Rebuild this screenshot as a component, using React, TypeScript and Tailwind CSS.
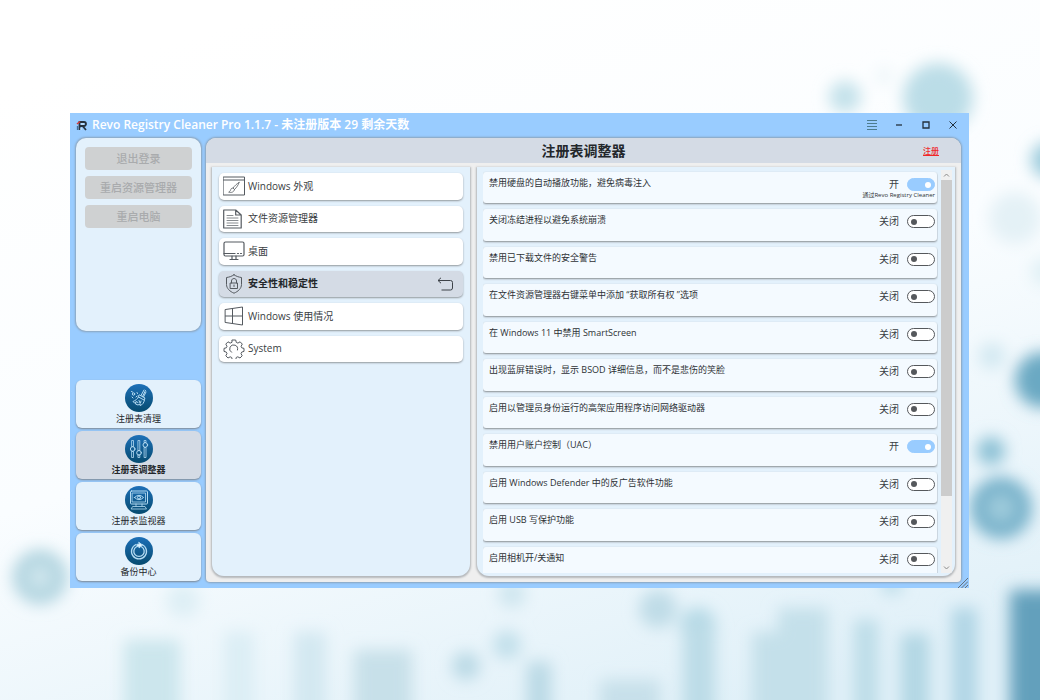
import type { ReactNode } from "react";

const commands = ["退出登录", "重启资源管理器", "重启电脑"];

const tweaks = [
  { text: "禁用硬盘的自动播放功能，避免病毒注入", on: true, note: "通过Revo Registry Cleaner" },
  { text: "关闭冻结进程以避免系统崩溃", on: false },
  { text: "禁用已下载文件的安全警告", on: false },
  { text: "在文件资源管理器右键菜单中添加 “获取所有权 ”选项", on: false },
  { text: "在 Windows 11 中禁用 SmartScreen", on: false },
  { text: "出现蓝屏错误时，显示 BSOD 详细信息，而不是悲伤的笑脸", on: false },
  { text: "启用以管理员身份运行的高架应用程序访问网络驱动器", on: false },
  { text: "禁用用户账户控制（UAC）", on: true },
  { text: "启用 Windows Defender 中的反广告软件功能", on: false },
  { text: "启用 USB 写保护功能", on: false },
  { text: "启用相机开/关通知", on: false },
];

function LineIcon({ children }: { children: ReactNode }) {
  return (
    <svg
      viewBox="0 0 22 20"
      className="w-[22px] h-5 shrink-0"
      fill="none"
      stroke="#555a60"
      strokeWidth="1"
      strokeLinejoin="round"
      strokeLinecap="round"
    >
      {children}
    </svg>
  );
}

const categories = [
  {
    label: "Windows 外观",
    icon: (
      <LineIcon>
        <path d="M.5 1h21v18H.5zM.5 4h21" />
        <path d="M16 6.500c-2 1-4.500 3.500-6 5.500l1.500 1.500c2-2 4-4.500 4.500-7zM10 12c-2 0-2 1-2.500 2.300-.4 1-1 1.500-1.800 1.900 2.300.7 5.300.2 5.800-2.700" strokeWidth=".8" />
      </LineIcon>
    ),
  },
  {
    label: "文件资源管理器",
    icon: (
      <LineIcon>
        <path d="M.7 1h12l5.500 5v13H.7zM12.700 1v5h5.500" strokeWidth="1.200" />
        <path d="M4 6.500h6M4 9h11M4 11.500h11M4 14h11M4 16.500h11" strokeWidth=".7" />
      </LineIcon>
    ),
  },
  {
    label: "桌面",
    icon: (
      <LineIcon>
        <rect x="1" y="1" width="20" height="14" rx="1.500" strokeWidth="1.200" />
        <path d="M1 12.500h11M14.500 12.500h1M17.500 12.500h1M9 15v3M13 15v3M7 18.500h8" strokeWidth="1.200" />
      </LineIcon>
    ),
  },
  {
    label: "安全性和稳定性",
    active: true,
    icon: (
      <LineIcon>
        <path d="M11 .8c2.500 1.700 5 2.400 7.500 2.700v7c0 4-3.500 7-7.500 8.700C7 17.500 3.500 14.500 3.500 10.500v-7C6 3.200 8.500 2.500 11 .8z" />
        <path d="M7.500 9h7v5.500h-7zM8.500 9V7c0-3.300 5-3.300 5 0v2M11 11v1.500" />
      </LineIcon>
    ),
  },
  {
    label: "Windows 使用情况",
    icon: (
      <LineIcon>
        <path d="M2.500 3.500L19.500 1v18l-17-2.500zM9.500 2.500v15M2.500 10h17" />
      </LineIcon>
    ),
  },
  {
    label: "System",
    icon: (
      <LineIcon>
        <path d="M9.300 1h3.400l.6 2.400 1.600.7 2.200-1.300 2.200 2.300-1.200 2.200.6 1.500 2.300.6v3l-2.300.7-.7 1.500 1.200 2.200-2.200 2.200-2.200-1.200-1.500.6-.6 2.500H9.300l-.6-2.400-1.500-.7L5 19l-2.200-2.200L4 14.600l-.7-1.500L1 12.400v-3l2.300-.6.7-1.500-1.200-2.200L5 2.800l2.200 1.300 1.500-.7z" />
        <path d="M8.500 13.300a4 4 0 1 1 6-2.300" />
      </LineIcon>
    ),
  },
];

function RoundIcon({ children }: { children: ReactNode }) {
  return (
    <span className="flex size-7 items-center justify-center rounded-full bg-linear-to-b from-[#1d70b8] to-[#064b70]">
      <svg
        viewBox="0 0 28 28"
        className="size-7"
        fill="none"
        stroke="#b5dcf3"
        strokeWidth="1"
        strokeLinejoin="round"
        strokeLinecap="round"
      >
        {children}
      </svg>
    </span>
  );
}

const modules = [
  {
    label: "注册表清理",
    icon: (
      <RoundIcon>
        <path d="M20.500 6.500l-3 6M19 6l-3 5.500M21 8l-2.500 5" />
        <path d="M14.500 11l5.500 3-1 2-5.500-3zM13.500 13c-1 2-3 3.500-5.500 4.500l1.500 1.500 1.500-.5-.5 1.500 2.500 1 2-1 0 1.500c2.500-.5 4-3 4.500-5.500M11 17.500l2 1M14 16.500l1 2.500M16 17l-.5 2" />
        <circle cx="8.500" cy="10" r="1.200" />
        <path d="M11 13l1-1M7 13l1 1M12 8.500l.5 1M6.500 7.500l1 .5" />
      </RoundIcon>
    ),
  },
  {
    label: "注册表调整器",
    active: true,
    icon: (
      <RoundIcon>
        <path d="M7 5.500h1.500v6H7zM7 16.500h1.500v6H7zM13.300 5.500h1.500v10h-1.500zM13.300 20h1.500v2.500h-1.500zM19.500 5.500h1.500v2h-1.500zM19.500 12.500h1.500v10h-1.500z" strokeWidth=".8" />
        <circle cx="7.700" cy="14" r="2.300" />
        <circle cx="14" cy="17.800" r="2.300" />
        <circle cx="20.300" cy="10" r="2.300" />
      </RoundIcon>
    ),
  },
  {
    label: "注册表监视器",
    icon: (
      <RoundIcon>
        <rect x="5.500" y="5" width="17" height="13" rx="1" />
        <path d="M7.500 7h13v9h-13zM11 18v2M17 18v2M8 20.500h12l1.500 2.500h-15z" strokeWidth=".8" />
        <path d="M9.500 11.500q4.500-4.500 9 0-4.500 4.500-9 0z" />
        <circle cx="14" cy="11.500" r="1.500" />
      </RoundIcon>
    ),
  },
  {
    label: "备份中心",
    icon: (
      <RoundIcon>
        <path d="M11 7.500a7.500 7.500 0 1 0 6 0M11.500 9.700a5.200 5.200 0 1 0 5 0" strokeWidth="1.300" />
        <path d="M14 5.500l3.500 2.500-3.500 3V9.300l-2 .4V7.300l2-.2z" fill="#e6f5ff" />
      </RoundIcon>
    ),
  },
];

// soft blobs and columns behind the window
function Backdrop() {
  return (
    <svg
      viewBox="0 0 1040 700"
      preserveAspectRatio="none"
      className="absolute inset-0 size-full"
      aria-hidden="true"
    >
      <defs>
        <linearGradient id="sky" x1=".3" y1="0" x2=".75" y2="1">
          <stop offset="0" stopColor="#ffffff" />
          <stop offset=".5" stopColor="#fafdff" />
          <stop offset="1" stopColor="#e0f0f8" />
        </linearGradient>
        <filter id="blur" x="-80" y="-80" width="1200" height="860" filterUnits="userSpaceOnUse">
          <feGaussianBlur stdDeviation="8" />
        </filter>
      </defs>
      <rect width="1040" height="700" fill="url(#sky)" />
      <g filter="url(#blur)">
        <circle cx="845" cy="97" r="16" fill="#c3e1ea" />
        <circle cx="884" cy="76" r="9" fill="#edf6f9" />
        <circle cx="938" cy="98" r="35" fill="#bbdde7" />
        <circle cx="1015" cy="218" r="26" fill="#e4f1f6" />
        <circle cx="1049" cy="160" r="18" fill="#9bcbdc" />
        <circle cx="1045" cy="272" r="14" fill="#e0f0f5" />
        <circle cx="992" cy="356" r="13" fill="#d2e8f1" />
        <circle cx="1043" cy="380" r="28" fill="#6aa9c3" />
        <circle cx="991" cy="451" r="14" fill="#8ac0d4" />
        <circle cx="1001" cy="508" r="23" fill="#9dcadb" stroke="#70adc7" strokeWidth="15" />
        <circle cx="40" cy="577" r="20" fill="#cfe6ed" stroke="#add2de" strokeWidth="14" />
        <circle cx="183" cy="601" r="17" fill="#deeff5" />
        <circle cx="512" cy="594" r="14" fill="#cfe6ef" />
        <circle cx="658" cy="609" r="19" fill="#bfdce7" />
        <circle cx="698" cy="626" r="18" fill="#b3d8e5" />
        <circle cx="507" cy="645" r="14" fill="#c1dfea" />
        <circle cx="466" cy="666" r="14" fill="#bad9e5" />
        <circle cx="892" cy="584" r="11" fill="#bddde9" />
        <rect x="124" y="640" width="56" height="90" fill="#cce6ed" />
        <rect x="224" y="632" width="30" height="100" fill="#dceef5" />
        <rect x="294" y="632" width="32" height="100" fill="#d3e8f1" />
        <rect x="354" y="650" width="58" height="90" fill="#c7e0e9" />
        <rect x="527" y="662" width="24" height="80" fill="#bad9e5" />
        <rect x="600" y="680" width="60" height="60" fill="#c7e0ea" />
        <rect x="683" y="622" width="32" height="130" fill="#bcdce7" />
        <rect x="752" y="632" width="76" height="120" fill="#c4e0ea" />
        <rect x="778" y="608" width="50" height="140" fill="#c4e0ea" />
        <rect x="854" y="620" width="24" height="130" fill="#bddde8" />
        <rect x="901" y="634" width="28" height="120" fill="#b2d7e4" />
        <rect x="952" y="608" width="25" height="140" fill="#b0d5e5" />
        <rect x="1010" y="590" width="80" height="170" fill="#64a0bc" />
      </g>
    </svg>
  );
}

function TitleBar() {
  return (
    <header className="flex h-6 shrink-0 items-center pl-[6px] pr-[10px]">
      <svg viewBox="0 0 11 11" className="size-[11px]" fill="none">
        <path d="M3.500 10V2H8a2 2 0 0 1 0 4H4M6.500 6L10 10" stroke="#26313d" strokeWidth="1.800" />
        <path d="M1.500 6v4" stroke="#3d6f9c" strokeWidth="1.300" />
        <path d="M1 4L4 1.500" stroke="#d33a3a" strokeWidth="1.500" />
        <path d="M5 4h3M5 8v2" stroke="#d5e9f7" strokeWidth="1" />
      </svg>
      <h1 className="ml-[5px] flex-1 text-[12px] leading-5 font-semibold text-white whitespace-nowrap">
        Revo Registry Cleaner Pro 1.1.7 - 未注册版本 29 剩余天数
      </h1>
      <div className="flex items-center gap-[15px] text-[#23303d]">
        <button aria-label="Menu">
          <svg viewBox="0 0 12 12" className="size-3" stroke="#4d7c8e" strokeWidth="1">
            <path d="M1 1.500h10M1 4.500h10M1 7.500h10M1 10.500h10" />
          </svg>
        </button>
        <button aria-label="Minimize">
          <svg viewBox="0 0 12 12" className="size-3" stroke="currentColor" strokeWidth="1.300">
            <path d="M3 6h6" />
          </svg>
        </button>
        <button aria-label="Maximize">
          <svg viewBox="0 0 12 12" className="size-3" stroke="currentColor" strokeWidth="1.300" fill="none">
            <path d="M3 3h6v6H3z" />
          </svg>
        </button>
        <button aria-label="Close">
          <svg viewBox="0 0 12 12" className="size-3" stroke="currentColor" strokeWidth="1">
            <path d="M2.500 2.500l7 7M9.500 2.500l-7 7" />
          </svg>
        </button>
      </div>
    </header>
  );
}

function Sidebar() {
  return (
    <aside className="flex w-[125px] shrink-0 flex-col justify-between">
      <div className="flex h-[193px] flex-col gap-[6px] rounded-[10px] bg-[#e3f1fc] px-[9px] pt-[9px] shadow-[0_0_2px_1px_#8ba3bb]">
        {commands.map((label) => (
          <button
            key={label}
            disabled
            className="h-[23px] rounded-[4px] bg-[#cfd1d2] text-[11px] leading-[21px] font-medium text-[#a9abad]"
          >
            {label}
          </button>
        ))}
      </div>
      <nav className="flex flex-col gap-[3px] pb-px">
        {modules.map((item) => (
          <button
            key={item.label}
            className={
              "flex h-12 flex-col items-center rounded-[6px] pt-1 text-[9px] leading-[13px] text-[#23272b] shadow-[0_1px_2px_#7d8792] " +
              (item.active ? "bg-[#d4dbe5] font-bold" : "bg-[#e3f1fc]")
            }
          >
            {item.icon}
            {item.label}
          </button>
        ))}
      </nav>
    </aside>
  );
}

function CategoryList() {
  return (
    <div className="min-w-0 rounded-b-[12px] bg-[#e3f1fc] px-[7px] pt-[6px] shadow-[0_1px_2px_1px_#b4b7ba]">
      <div className="grid h-[189px] grid-rows-6 gap-[6px]">
        {categories.map((item) => (
          <button
            key={item.label}
            className={
              "flex items-center gap-[3px] rounded-[5px] pl-1 pr-[9px] text-left text-[10px] shadow-[0_1px_2px_#92989d] " +
              (item.active ? "bg-[#d4dbe5] font-bold text-[#24282c]" : "bg-white text-[#3a3e43]")
            }
          >
            {item.icon}
            <span className="flex-1">{item.label}</span>
            {item.active && (
              <svg viewBox="0 0 17 14" className="h-[14px] w-[17px]" fill="none" stroke="#3d4248">
                <path d="M4 .8L1 3.500l3 2.700M1 3.500h12.500a2 2 0 0 1 2 2V11a2 2 0 0 1-2 2h-9" />
              </svg>
            )}
          </button>
        ))}
      </div>
    </div>
  );
}

function TweakList() {
  return (
    <div className="flex min-h-0 min-w-0 gap-[3px] overflow-hidden rounded-b-[12px] bg-[#e3f1fc] pl-[6px] pr-[3px] pb-[3px] shadow-[0_1px_2px_1px_#b4b7ba]">
      <div className="min-h-0 flex-1 overflow-hidden pt-[5px] pr-px">
        <ul className="grid h-[406px] grid-rows-11 gap-[6px]">
          {tweaks.map((tweak, i) => (
            <li
              key={tweak.text}
              className="flex justify-between rounded-[3px] bg-[#f4faff] pl-[6px] pr-[2px] shadow-[0_1px_2px_#888d91]"
            >
              <label htmlFor={`tweak-${i}`} className="pt-1 text-[9px] leading-[14px] text-[#2d3135]">
                {tweak.text}
              </label>
              <div className="flex flex-col items-end pt-[6px]">
                <div className="flex items-center gap-2">
                  <span className="text-[10px] leading-[13px] text-[#3a3e43]">
                    {tweak.on ? "开" : "关闭"}
                  </span>
                  <input
                    id={`tweak-${i}`}
                    type="checkbox"
                    role="switch"
                    defaultChecked={tweak.on}
                    className="flex h-[13px] w-7 appearance-none items-center rounded-full border border-[#55585c] bg-white px-[3px] before:size-[6px] before:rounded-full before:bg-[#55585c] checked:justify-end checked:border-[#99ccff] checked:bg-[#99ccff] checked:before:bg-white"
                  />
                </div>
                {tweak.note && (
                  <span className="text-[6px] leading-[9px] text-[#2d3135]">{tweak.note}</span>
                )}
              </div>
            </li>
          ))}
        </ul>
      </div>
      <div className="mt-[3px] flex w-[11px] flex-col items-center bg-[#f0f0f0]">
        <svg viewBox="0 0 11 10" className="h-[10px] w-[11px] shrink-0" fill="none" stroke="#8b8b8b">
          <path d="M3 6.500L5.500 4 8 6.500" />
        </svg>
        <div className="w-full flex-[315] bg-[#cccccc]" />
        <div className="flex-[67]" />
        <svg viewBox="0 0 11 10" className="h-[10px] w-[11px] shrink-0" fill="none" stroke="#8b8b8b">
          <path d="M3 3.500L5.500 6 8 3.500" />
        </svg>
      </div>
    </div>
  );
}

export default function App() {
  return (
    <div className="relative h-screen overflow-hidden bg-white font-['Open_Sans','Noto_Sans_CJK_SC',sans-serif]">
      <Backdrop />
      <div className="relative flex h-full px-[70px] pt-[113px] pb-[112px]">
        <div className="relative mr-px flex min-w-0 flex-1 flex-col bg-[#99ccff]">
          <TitleBar />
          <div className="flex min-h-0 flex-1 gap-[5px] pt-px pr-2 pb-[6px] pl-[6px]">
            <Sidebar />
            <main className="flex min-w-0 flex-1 flex-col rounded-t-[10px] rounded-b-[4px] bg-[#efefef] shadow-[0_0_2px_1px_#8ba3bb]">
              <div className="flex h-[25px] shrink-0 items-center rounded-t-[10px] bg-[#d4dbe5] px-[22px]">
                <span className="w-4" />
                <h2 className="flex-1 text-center text-[14px] leading-5 font-bold text-[#23272b]">
                  注册表调整器
                </h2>
                <a href="#register" className="text-[8px] leading-[14px] font-medium text-[#f02828] underline">
                  注册
                </a>
              </div>
              <div className="grid min-h-0 flex-1 grid-cols-[258fr_478fr] grid-rows-1 gap-[7px] px-[6px] pt-1 pb-[6px]">
                <CategoryList />
                <TweakList />
              </div>
            </main>
          </div>
          <svg viewBox="0 0 10 10" className="absolute right-px bottom-0 size-[10px]" stroke="#66727d">
            <path d="M0 10L10 0M3.500 10L10 3.500M7 10l3-3" />
          </svg>
        </div>
      </div>
    </div>
  );
}
